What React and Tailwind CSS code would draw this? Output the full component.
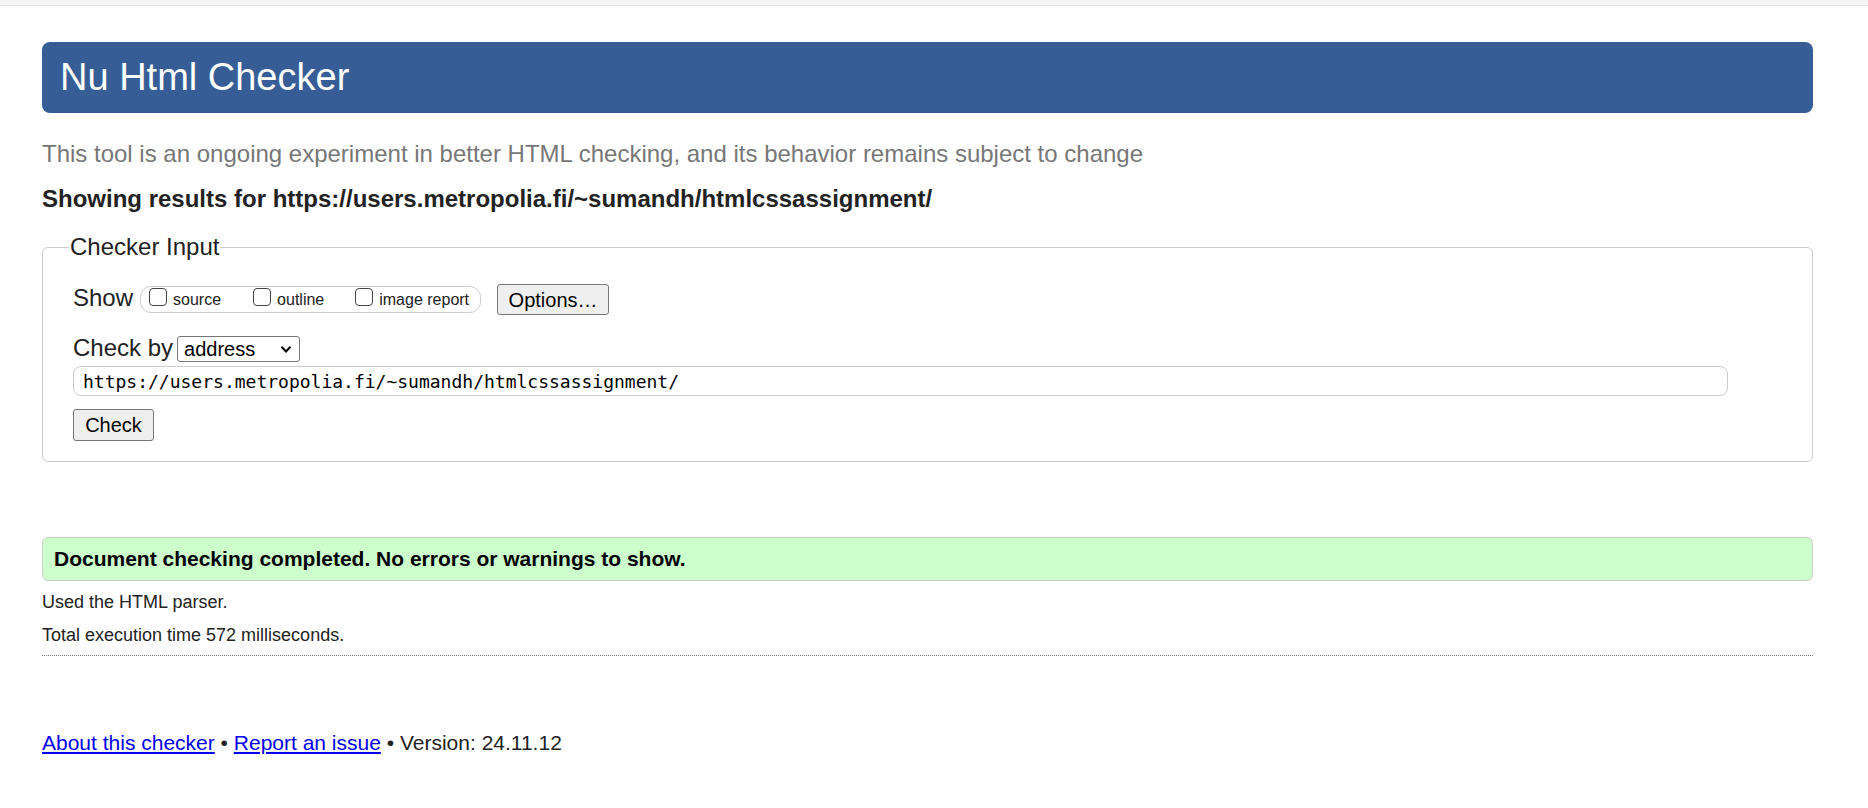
import React, { useState } from "react";

export default function App() {
  const [url, setUrl] = useState("https://users.metropolia.fi/~sumandh/htmlcssassignment/");
  const [mode, setMode] = useState("address");

  return (
    <div className="min-h-screen bg-white text-[#222] font-['Liberation_Sans',Arial,sans-serif]">
      {/* top strip */}
      <div className="h-[6px] bg-[#f5f5f5] border-b border-[#e4e4e4]"></div>

      <div className="ml-[42px] w-[1771px]">
        {/* Title */}
        <h1 className="mt-[36px] h-[71px] flex items-center pl-[18px] rounded-[8px] bg-[#365d95] text-white text-[38px] font-normal">
          Nu Html Checker
        </h1>

        <p className="mt-[27px] text-[24px] leading-[28px] text-[#777]">
          This tool is an ongoing experiment in better HTML checking, and its behavior remains subject to change
        </p>

        <p className="mt-[17px] text-[24px] leading-[28px] font-bold text-[#222]">
          Showing results for https://users.metropolia.fi/~sumandh/htmlcssassignment/
        </p>

        {/* Checker input */}
        <fieldset className="mt-[20px] border border-[#ccc] rounded-[6px] pl-[30px] pr-[84px] pb-[20px]">
          <legend className="-ml-[4px] px-[1px] text-[24px] leading-[28px] text-[#222]">Checker Input</legend>

          <div className="mt-[23px] flex items-start">
            <span className="text-[24px] leading-[27px] text-[#222]">Show</span>
            <div className="ml-[7px] mt-[2px] h-[27px] flex items-center pl-[8px] pr-[11px] border border-[#ccc] rounded-[11px] text-[16px] leading-[20px] text-[#222]">
              <label className="flex items-center gap-[6px]">
                <input type="checkbox" className="appearance-none w-[18px] h-[18px] -translate-y-[3px] border border-[#444] rounded-[4px] bg-white" />
                <span>source</span>
              </label>
              <label className="ml-[32px] flex items-center gap-[6px]">
                <input type="checkbox" className="appearance-none w-[18px] h-[18px] -translate-y-[3px] border border-[#444] rounded-[4px] bg-white" />
                <span>outline</span>
              </label>
              <label className="ml-[31px] flex items-center gap-[6px]">
                <input type="checkbox" className="appearance-none w-[18px] h-[18px] -translate-y-[3px] border border-[#444] rounded-[4px] bg-white" />
                <span>image report</span>
              </label>
            </div>
            <button className="ml-[16px] h-[31px] w-[112px] bg-[#efefef] border border-[#767676] rounded-[3px] text-[20px] leading-[24px] text-black">
              Options…
            </button>
          </div>

          <div className="mt-[19px] flex items-start">
            <span className="text-[24px] leading-[27px] text-[#222]">Check by</span>
            <div className="relative ml-[4px] mt-[2px]">
              <select
                value={mode}
                onChange={(e) => setMode(e.target.value)}
                className="appearance-none block h-[26px] w-[123px] pl-[6px] bg-white border border-[#767676] rounded-[3px] text-[20px] leading-[22px] text-black"
              >
                <option value="address">address</option>
                <option value="file">file upload</option>
                <option value="textarea">text input</option>
              </select>
              <svg className="pointer-events-none absolute right-[8px] top-[9px]" width="12" height="9" viewBox="0 0 12 9">
                <path d="M1.5 1.8 L6 6.5 L10.5 1.8" fill="none" stroke="#000" strokeWidth="2" />
              </svg>
            </div>
          </div>

          <input
            value={url}
            onChange={(e) => setUrl(e.target.value)}
            className="mt-[4px] block w-full h-[30px] pl-[9px] border border-[#ccc] rounded-[8px] bg-white text-[18px] text-black font-['DejaVu_Sans_Mono','Liberation_Mono',monospace]"
          />

          <button className="mt-[13px] block h-[32px] w-[81px] bg-[#efefef] border border-[#767676] rounded-[3px] text-[20px] leading-[24px] text-black">
            Check
          </button>
        </fieldset>

        {/* Result */}
        <div className="mt-[75px] h-[44px] flex items-center pl-[11px] bg-[#ccffcc] border border-[#ccc] rounded-[6px]">
          <p className="text-[21px] leading-[24px] font-bold text-black">Document checking completed. No errors or warnings to show.</p>
        </div>

        <p className="mt-[11px] text-[18px] leading-[21px] text-[#222]">Used the HTML parser.</p>
        <p className="mt-[12px] text-[18px] leading-[21px] text-[#222]">Total execution time 572 milliseconds.</p>
        <div className="mt-[9px] border-b border-dotted border-[#777]"></div>

        <p className="mt-[75px] text-[21px] leading-[24px] text-[#222]">
          <a href="#about" className="text-[#0000ee] underline">About this checker</a>
          {" • "}
          <a href="#issue" className="text-[#0000ee] underline">Report an issue</a>
          {" • Version: 24.11.12"}
        </p>
      </div>
    </div>
  );
}
